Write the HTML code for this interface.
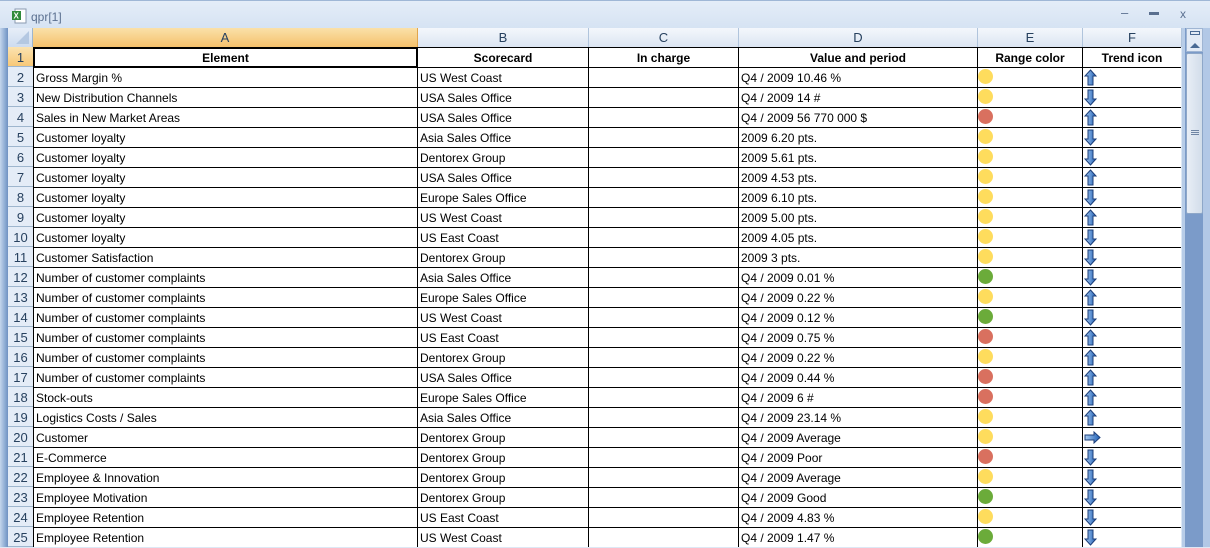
<!DOCTYPE html><html><head><style>
*{margin:0;padding:0;box-sizing:border-box}
body{width:1210px;height:547px;overflow:hidden;background:#dde8f5;font-family:"Liberation Sans",Tahoma,sans-serif;position:relative}
.title{position:absolute;left:0;top:0;width:1210px;height:28px;background:linear-gradient(#e4edf8,#d6e3f3);border-top:1px solid #9fb7d6}
.title span{position:absolute;left:31px;top:9px;font-size:12px;color:#5a6f8f}
.lb{position:absolute;left:0;top:28px;width:8px;height:519px;background:linear-gradient(90deg,#c5d6ec,#8fadd4 60%,#6f92c2)}
.corner{position:absolute;left:8px;top:28px;width:25px;height:19px;background:linear-gradient(#e7eef8,#cddcf0);border-right:1px solid #9eb6ce}
.corner:after{content:"";position:absolute;right:3px;bottom:3px;border-left:13px solid transparent;border-bottom:13px solid #b4c8e2}
.ch{position:absolute;top:28px;height:19px;background:linear-gradient(#f4f7fc,#dbe5f2);border-right:1px solid #b0c4dc;font-size:13px;color:#27415f;text-align:center;line-height:20px}
.ch.sel{background:linear-gradient(#fae1a9,#f5c16c);color:#27415f;border-right:1px solid #e0a54d}
.rh{position:absolute;left:8px;width:25px;height:20px;background:#e4ecf7;border-bottom:1px solid #9eb6ce;font-size:13px;color:#27415f;text-align:center;line-height:21px}
.rh.sel{background:linear-gradient(#fbe3b0,#f7c877)}
.grid{position:absolute;left:33px;top:47px;background:#000;display:grid;grid-template-columns:383px 170px 149px 238px 104px 98px;grid-auto-rows:19px;gap:1px;padding:1px 0 0 1px}
.grid div{background:#fff;font-size:12px;line-height:21px;padding-left:2px;white-space:nowrap;overflow:hidden;position:relative;color:#000}
.grid .h{font-weight:bold;text-align:center;padding:0}
.grid svg{position:absolute;left:1px;top:1px}
.d{position:absolute;left:0;top:1px;width:15px;height:15px;border-radius:50%}
.y{background:#fedc5d}.r{background:#d9705f}.g{background:#6bab3a}
.sb{position:absolute;left:1182px;top:28px;width:28px;height:519px;background:linear-gradient(90deg,#b8cde8 0,#b8cde8 3px,#7b9bc9 3px,#7b9bc9 21px,#b2c8e6 21px)}
.thumb{position:absolute;left:1186px;top:53px;width:17px;height:161px;background:linear-gradient(90deg,#e8eef6,#d2ddea);border:1px solid #8ea7c8;border-radius:2px}
.btn{position:absolute;left:1186px;top:28px;width:17px;height:24px;background:#e3ebf6;border:1px solid #9fb5d3}
</style></head><body>
<div class="title"><svg style="position:absolute;left:11px;top:7px" width="16" height="16"><rect x="4" y="1" width="11" height="14" fill="#fff" stroke="#8a9ab0"/><rect x="1" y="3" width="9" height="9" fill="#2f8a3a"/><text x="2.5" y="10.5" font-size="8" font-weight="bold" fill="#fff" font-family="Liberation Sans">X</text></svg><span>qpr[1]</span>
<span style="left:1121px;top:4px;color:#5a6f8f;font-size:13px">–</span><span style="left:1149px;top:6px;font-size:10px;color:#5a6f8f">▬</span><span style="left:1180px;top:6px;font-size:12px;color:#5a6f8f">x</span></div>
<div class="lb"></div>
<div class="corner"></div>
<div class="ch sel" style="left:33px;width:385px">A</div>
<div class="ch" style="left:418px;width:171px">B</div>
<div class="ch" style="left:589px;width:150px">C</div>
<div class="ch" style="left:739px;width:239px">D</div>
<div class="ch" style="left:978px;width:105px">E</div>
<div class="ch" style="left:1083px;width:99px">F</div>
<div class="rh sel" style="top:47px">1</div><div class="rh" style="top:67px">2</div><div class="rh" style="top:87px">3</div><div class="rh" style="top:107px">4</div><div class="rh" style="top:127px">5</div><div class="rh" style="top:147px">6</div><div class="rh" style="top:167px">7</div><div class="rh" style="top:187px">8</div><div class="rh" style="top:207px">9</div><div class="rh" style="top:227px">10</div><div class="rh" style="top:247px">11</div><div class="rh" style="top:267px">12</div><div class="rh" style="top:287px">13</div><div class="rh" style="top:307px">14</div><div class="rh" style="top:327px">15</div><div class="rh" style="top:347px">16</div><div class="rh" style="top:367px">17</div><div class="rh" style="top:387px">18</div><div class="rh" style="top:407px">19</div><div class="rh" style="top:427px">20</div><div class="rh" style="top:447px">21</div><div class="rh" style="top:467px">22</div><div class="rh" style="top:487px">23</div><div class="rh" style="top:507px">24</div><div class="rh" style="top:527px">25</div>
<svg width="0" height="0" style="position:absolute"><defs>
<linearGradient id="ag" x1="0" x2="1"><stop offset="0" stop-color="#a9cdf3"/><stop offset="1" stop-color="#1f5fb5"/></linearGradient>
<symbol id="up" viewBox="0 0 13 17"><path d="M6.5 1 L12 7 L9 7 L9 16 L4 16 L4 7 L1 7 Z" fill="url(#ag)" stroke="#1d3f7a"/></symbol>
<symbol id="dn" viewBox="0 0 13 17"><path d="M6.5 16 L12 10 L9 10 L9 1 L4 1 L4 10 L1 10 Z" fill="url(#ag)" stroke="#1d3f7a"/></symbol>
<symbol id="rt" viewBox="0 0 17 13"><path d="M16 6.5 L10 1 L10 4 L1 4 L1 9 L10 9 L10 12 Z" fill="url(#ag)" stroke="#1d3f7a"/></symbol>
</defs></svg>
<div class="grid">
<div class="h" style="outline:2px solid #000;outline-offset:-1px">Element</div><div class="h">Scorecard</div><div class="h">In charge</div><div class="h">Value and period</div><div class="h">Range color</div><div class="h">Trend icon</div>
<div>Gross Margin %</div><div>US West Coast</div><div></div><div>Q4 / 2009 10.46 %</div><div><i class="d y"></i></div><div><svg width="13" height="17"><use href="#up"/></svg></div>
<div>New Distribution Channels</div><div>USA Sales Office</div><div></div><div>Q4 / 2009 14 #</div><div><i class="d y"></i></div><div><svg width="13" height="17"><use href="#dn"/></svg></div>
<div>Sales in New Market Areas</div><div>USA Sales Office</div><div></div><div>Q4 / 2009 56 770 000 $</div><div><i class="d r"></i></div><div><svg width="13" height="17"><use href="#up"/></svg></div>
<div>Customer loyalty</div><div>Asia Sales Office</div><div></div><div>2009 6.20 pts.</div><div><i class="d y"></i></div><div><svg width="13" height="17"><use href="#dn"/></svg></div>
<div>Customer loyalty</div><div>Dentorex Group</div><div></div><div>2009 5.61 pts.</div><div><i class="d y"></i></div><div><svg width="13" height="17"><use href="#dn"/></svg></div>
<div>Customer loyalty</div><div>USA Sales Office</div><div></div><div>2009 4.53 pts.</div><div><i class="d y"></i></div><div><svg width="13" height="17"><use href="#up"/></svg></div>
<div>Customer loyalty</div><div>Europe Sales Office</div><div></div><div>2009 6.10 pts.</div><div><i class="d y"></i></div><div><svg width="13" height="17"><use href="#dn"/></svg></div>
<div>Customer loyalty</div><div>US West Coast</div><div></div><div>2009 5.00 pts.</div><div><i class="d y"></i></div><div><svg width="13" height="17"><use href="#up"/></svg></div>
<div>Customer loyalty</div><div>US East Coast</div><div></div><div>2009 4.05 pts.</div><div><i class="d y"></i></div><div><svg width="13" height="17"><use href="#dn"/></svg></div>
<div>Customer Satisfaction</div><div>Dentorex Group</div><div></div><div>2009 3 pts.</div><div><i class="d y"></i></div><div><svg width="13" height="17"><use href="#dn"/></svg></div>
<div>Number of customer complaints</div><div>Asia Sales Office</div><div></div><div>Q4 / 2009 0.01 %</div><div><i class="d g"></i></div><div><svg width="13" height="17"><use href="#dn"/></svg></div>
<div>Number of customer complaints</div><div>Europe Sales Office</div><div></div><div>Q4 / 2009 0.22 %</div><div><i class="d y"></i></div><div><svg width="13" height="17"><use href="#up"/></svg></div>
<div>Number of customer complaints</div><div>US West Coast</div><div></div><div>Q4 / 2009 0.12 %</div><div><i class="d g"></i></div><div><svg width="13" height="17"><use href="#dn"/></svg></div>
<div>Number of customer complaints</div><div>US East Coast</div><div></div><div>Q4 / 2009 0.75 %</div><div><i class="d r"></i></div><div><svg width="13" height="17"><use href="#up"/></svg></div>
<div>Number of customer complaints</div><div>Dentorex Group</div><div></div><div>Q4 / 2009 0.22 %</div><div><i class="d y"></i></div><div><svg width="13" height="17"><use href="#up"/></svg></div>
<div>Number of customer complaints</div><div>USA Sales Office</div><div></div><div>Q4 / 2009 0.44 %</div><div><i class="d r"></i></div><div><svg width="13" height="17"><use href="#up"/></svg></div>
<div>Stock-outs</div><div>Europe Sales Office</div><div></div><div>Q4 / 2009 6 #</div><div><i class="d r"></i></div><div><svg width="13" height="17"><use href="#up"/></svg></div>
<div>Logistics Costs / Sales</div><div>Asia Sales Office</div><div></div><div>Q4 / 2009 23.14 %</div><div><i class="d y"></i></div><div><svg width="13" height="17"><use href="#up"/></svg></div>
<div>Customer</div><div>Dentorex Group</div><div></div><div>Q4 / 2009 Average</div><div><i class="d y"></i></div><div><svg width="17" height="13" style="top:3px"><use href="#rt"/></svg></div>
<div>E-Commerce</div><div>Dentorex Group</div><div></div><div>Q4 / 2009 Poor</div><div><i class="d r"></i></div><div><svg width="13" height="17"><use href="#dn"/></svg></div>
<div>Employee &amp; Innovation</div><div>Dentorex Group</div><div></div><div>Q4 / 2009 Average</div><div><i class="d y"></i></div><div><svg width="13" height="17"><use href="#dn"/></svg></div>
<div>Employee Motivation</div><div>Dentorex Group</div><div></div><div>Q4 / 2009 Good</div><div><i class="d g"></i></div><div><svg width="13" height="17"><use href="#dn"/></svg></div>
<div>Employee Retention</div><div>US East Coast</div><div></div><div>Q4 / 2009 4.83 %</div><div><i class="d y"></i></div><div><svg width="13" height="17"><use href="#dn"/></svg></div>
<div>Employee Retention</div><div>US West Coast</div><div></div><div>Q4 / 2009 1.47 %</div><div><i class="d g"></i></div><div><svg width="13" height="17"><use href="#dn"/></svg></div>
</div>
<div class="sb"></div>
<div class="btn"><div style="position:absolute;left:3px;top:2px;width:10px;height:4px;border:1px solid #4a6a94"></div><div style="position:absolute;left:3px;top:14px;border-left:5px solid transparent;border-right:5px solid transparent;border-bottom:5px solid #4a6a94"></div></div>
<div class="thumb"><div style="position:absolute;left:4px;top:76px;width:8px;height:5px;border-top:1px solid #6f85a4;border-bottom:1px solid #6f85a4"></div><div style="position:absolute;left:4px;top:78px;width:8px;height:1px;background:#6f85a4"></div></div>
</body></html>
